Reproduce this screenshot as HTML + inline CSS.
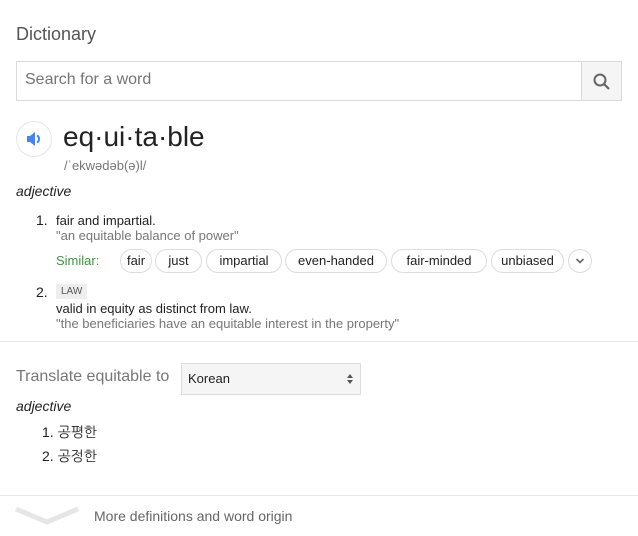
<!DOCTYPE html>
<html><head><meta charset="utf-8"><style>
*{margin:0;padding:0;box-sizing:border-box}
body{width:638px;height:536px;background:#fff;font-family:"Liberation Sans",Arial,sans-serif;position:relative;overflow:hidden;color:#222}
.a{position:absolute;white-space:nowrap}
.chip{position:absolute;top:249px;height:24px;border:1px solid #dadce0;border-radius:12px;font-size:13px;line-height:22px;text-align:center;color:#222}
.g{color:#777}
</style></head><body>
<div class="a" style="left:16px;top:24px;font-size:18px;color:#555">Dictionary</div>
<div class="a" style="left:16px;top:61px;width:606px;height:40px;border:1px solid #d9d9d9"></div>
<div class="a" style="left:25px;top:71px;font-size:16px;color:#757575">Search for a word</div>
<div class="a" style="left:581px;top:61px;width:41px;height:40px;background:#f5f5f5;border:1px solid #d9d9d9"></div>
<svg class="a" style="left:591px;top:71px" width="22" height="22" viewBox="0 0 22 22"><circle cx="9" cy="9" r="5.5" fill="none" stroke="#666" stroke-width="2"/><path d="M13 13l5 5" stroke="#666" stroke-width="2.2"/></svg>
<div class="a" style="left:16px;top:121px;width:36px;height:36px;border-radius:50%;border:1px solid #e5e5e5;background:#fff"></div>
<svg class="a" style="left:25px;top:130px" width="18" height="18" viewBox="0 0 18 18"><path d="M2 6h3l5-4v14l-5-4H2z" fill="#4285f4"/><path d="M12 5.5a4 4 0 010 7" stroke="#4285f4" stroke-width="2" fill="none"/></svg>
<div class="a" style="left:63px;top:121px;font-size:28px;color:#222">eq·ui·ta·ble</div>
<div class="a" style="left:64px;top:158px;font-size:13px;color:#777">/ˈekwədəb(ə)l/</div>
<div class="a" style="left:16px;top:183px;font-size:14px;font-style:italic">adjective</div>
<div class="a" style="left:36px;top:212px;font-size:14px">1.</div>
<div class="a" style="left:56px;top:213px;font-size:13px">fair and impartial.</div>
<div class="a g" style="left:56px;top:228px;font-size:13px">"an equitable balance of power"</div>
<div class="a" style="left:56px;top:253px;font-size:13px;color:#3c9a3c">Similar:</div>
<div class="chip" style="left:120px;width:32px">fair</div>
<div class="chip" style="left:155px;width:47px">just</div>
<div class="chip" style="left:206px;width:76px">impartial</div>
<div class="chip" style="left:285px;width:102px">even-handed</div>
<div class="chip" style="left:391px;width:96px">fair-minded</div>
<div class="chip" style="left:491px;width:73px">unbiased</div>
<div class="chip" style="left:568px;width:24px"></div>
<svg class="a" style="left:575px;top:257px" width="10" height="8" viewBox="0 0 10 8"><path d="M1.5 2l3.5 3.5L8.5 2" stroke="#666" stroke-width="1.6" fill="none"/></svg>
<div class="a" style="left:36px;top:284px;font-size:14px">2.</div>
<div class="a" style="left:56px;top:284px;height:15px;padding:0 5px;background:#eee;font-size:10px;line-height:15px;color:#555">LAW</div>
<div class="a" style="left:56px;top:301px;font-size:13px">valid in equity as distinct from law.</div>
<div class="a g" style="left:56px;top:316px;font-size:13px">"the beneficiaries have an equitable interest in the property"</div>
<div class="a" style="left:0;top:341px;width:638px;height:1px;background:#e8e8e8"></div>
<div class="a" style="left:16px;top:368px;font-size:16px;color:#777">Translate equitable to</div>
<div class="a" style="left:181px;top:363px;width:180px;height:32px;background:#f5f5f5;border:1px solid #ddd"></div>
<div class="a" style="left:188px;top:371px;font-size:13px">Korean</div>
<svg class="a" style="left:346px;top:373px" width="8" height="12" viewBox="0 0 8 12"><path d="M1 5l3-4 3 4zM1 7l3 4 3-4z" fill="#555"/></svg>
<div class="a" style="left:16px;top:398px;font-size:14px;font-style:italic">adjective</div>
<div class="a" style="left:42px;top:424px;font-size:14px;font-family:'Liberation Sans','NanumGothic','Noto Sans CJK KR',sans-serif">1. 공평한</div>
<div class="a" style="left:42px;top:448px;font-size:14px;font-family:'Liberation Sans','NanumGothic','Noto Sans CJK KR',sans-serif">2. 공정한</div>
<div class="a" style="left:0;top:495px;width:638px;height:1px;background:#e8e8e8"></div>
<svg class="a" style="left:14px;top:503px" width="66" height="24" viewBox="0 0 66 24"><path d="M2 6l31 13 31-13" stroke="#e6e6e6" stroke-width="5" fill="none"/></svg>
<div class="a" style="left:94px;top:508px;font-size:14px;color:#666">More definitions and word origin</div>
</body></html>
